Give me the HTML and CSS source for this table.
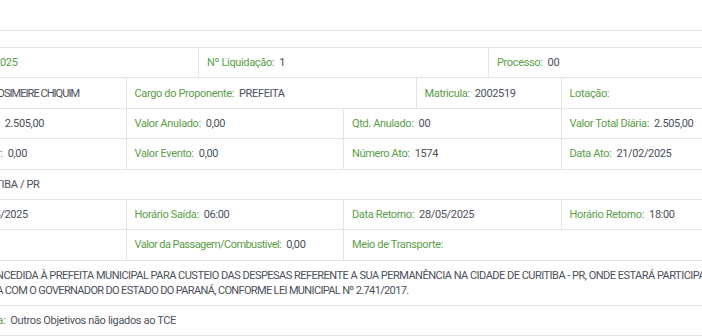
FILE: index.html
```html
<!DOCTYPE html>
<html lang="pt-BR">
<head>
<meta charset="utf-8">
<link rel="stylesheet" href="styles.css">
</head>
<body>
<div class="page">
  <div class="topbar"></div>
  <div class="details">
    <div class="row">
      <div class="cell s4"><span class="lbl">Empenhos:</span><span class="val green">362/2025</span></div>
      <div class="cell s4"><span class="lbl">Nº Liquidação:</span><span class="val">1</span></div>
      <div class="cell s4"><span class="lbl">Processo:</span><span class="val">00</span></div>
    </div>
    <div class="row">
      <div class="cell s3"><span class="lbl">Nome Servidor:</span><span class="val name">ROSIMEIRE CHIQUIM</span></div>
      <div class="cell s4"><span class="lbl">Cargo do Proponente:</span><span class="val">PREFEITA</span></div>
      <div class="cell s2"><span class="lbl">Matricula:</span><span class="val">2002519</span></div>
      <div class="cell s3"><span class="lbl">Lotação:</span><span class="val"></span></div>
    </div>
    <div class="row">
      <div class="cell s3"><span class="lbl">Valor Empenhado:</span><span class="val">2.505,00</span></div>
      <div class="cell s3"><span class="lbl">Valor Anulado:</span><span class="val">0,00</span></div>
      <div class="cell s3"><span class="lbl">Qtd. Anulado:</span><span class="val">00</span></div>
      <div class="cell s3"><span class="lbl">Valor Total Diária:</span><span class="val">2.505,00</span></div>
    </div>
    <div class="row">
      <div class="cell s3"><span class="lbl">Valor Suplementar:</span><span class="val">0,00</span></div>
      <div class="cell s3"><span class="lbl">Valor Evento:</span><span class="val">0,00</span></div>
      <div class="cell s3"><span class="lbl">Número Ato:</span><span class="val">1574</span></div>
      <div class="cell s3"><span class="lbl">Data Ato:</span><span class="val">21/02/2025</span></div>
    </div>
    <div class="row">
      <div class="cell s12"><span class="lbl">Cidade- UF:</span><span class="val">CURITIBA / PR</span></div>
    </div>
    <div class="row">
      <div class="cell s3"><span class="lbl">Data Saída:</span><span class="val">21/05/2025</span></div>
      <div class="cell s3"><span class="lbl">Horário Saída:</span><span class="val">06:00</span></div>
      <div class="cell s3"><span class="lbl">Data Retorno:</span><span class="val">28/05/2025</span></div>
      <div class="cell s3"><span class="lbl">Horário Retorno:</span><span class="val">18:00</span></div>
    </div>
    <div class="row">
      <div class="cell s3"></div>
      <div class="cell s3"><span class="lbl tight">Valor da Passagem/Combustivel:</span><span class="val">0,00</span></div>
      <div class="cell s6"><span class="lbl">Meio de Transporte:</span><span class="val"></span></div>
    </div>
    <div class="row">
      <div class="cell s12"><span class="lbl">Texto:</span><span class="val line1">DIÁRIA CONCEDIDA À PREFEITA MUNICIPAL PARA CUSTEIO DAS DESPESAS REFERENTE A SUA PERMANÊNCIA NA CIDADE DE CURITIBA - PR, ONDE ESTARÁ PARTICIPANDO DE</span><br><span class="val line2">REUNIÃO PAUTADA COM O GOVERNADOR DO ESTADO DO PARANÁ, CONFORME LEI MUNICIPAL Nº 2.741/2017.</span></div>
    </div>
    <div class="row">
      <div class="cell s12"><span class="lbl">Classe de Despesa:</span><span class="val">Outros Objetivos não ligados ao TCE</span></div>
    </div>
  </div>
</div>
</body>
</html>
```

FILE: styles.css
```css
html, body {
  margin: 0;
  padding: 0;
  background: #ffffff;
  overflow: hidden;
}

body {
  font-family: Roboto, "Liberation Sans", sans-serif;
  font-size: 11px;
  letter-spacing: -0.35px;
  color: #4b5059;
}

.page {
  margin-left: -92px;
  width: 870px;
}

.topbar {
  height: 30px;
  border-bottom: 1px solid #e4e4e4;
}

.details {
  margin-top: 16px;
  border-top: 1px solid #e4e4e4;
}

.row {
  display: grid;
  grid-template-columns: repeat(12, 1fr);
  border-bottom: 1px solid #e4e4e4;
}

.cell {
  padding: 7.2px 8px;
  line-height: 15px;
  white-space: nowrap;
  border-left: 1px solid #e4e4e4;
}

.cell:first-child {
  border-left: none;
}

.s2 { grid-column: span 2; }
.s3 { grid-column: span 3; }
.s4 { grid-column: span 4; }
.s6 { grid-column: span 6; }
.s12 { grid-column: span 12; }

.lbl {
  color: #5a9e47;
}

.lbl.tight {
  letter-spacing: -0.55px;
}

.val {
  margin-left: 5px;
  color: #4b5059;
}

.val.green {
  color: #5a9e47;
}

.val.name {
  letter-spacing: -0.95px;
}

.val.line1 {
  letter-spacing: -0.51px;
}

.val.line2 {
  margin-left: 0;
  letter-spacing: -0.65px;
}
```
